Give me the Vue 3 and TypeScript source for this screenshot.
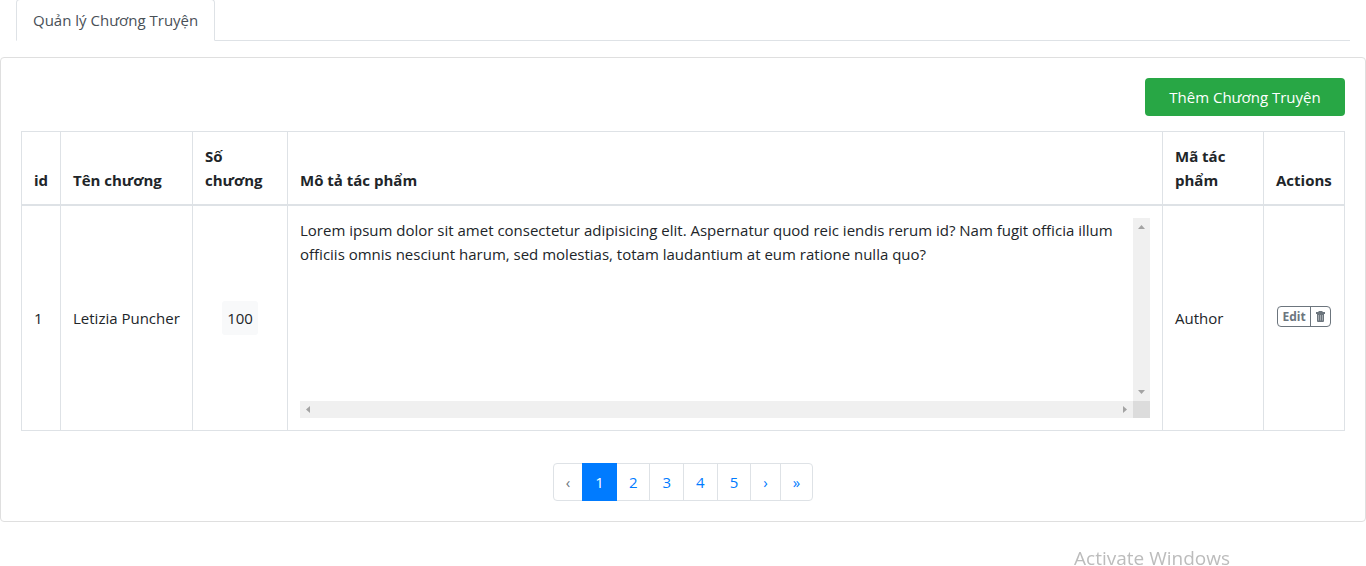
<script setup lang="ts">
interface Chapter {
  id: number
  name: string
  count: number
  description: string
  author: string
}

const chapters: Chapter[] = [
  {
    id: 1,
    name: 'Letizia Puncher',
    count: 100,
    description:
      'Lorem ipsum dolor sit amet consectetur adipisicing elit. Aspernatur quod reic iendis rerum id? Nam fugit officia illum officiis omnis nesciunt harum, sed molestias, totam laudantium at eum ratione nulla quo?',
    author: 'Author',
  },
]

const pages: number[] = [1, 2, 3, 4, 5]
const current = 1
</script>

<template>
  <div class="page">
    <nav class="tabs">
      <a class="tab" href="#">Quản lý Chương Truyện</a>
    </nav>

    <main class="card">
      <div class="toolbar">
        <button class="add" type="button">Thêm Chương Truyện</button>
      </div>

      <table class="grid">
        <colgroup>
          <col class="c-id" />
          <col class="c-name" />
          <col class="c-count" />
          <col />
          <col class="c-author" />
          <col class="c-actions" />
        </colgroup>
        <thead>
          <tr>
            <th scope="col">id</th>
            <th scope="col">Tên chương</th>
            <th scope="col">Số chương</th>
            <th scope="col">Mô tả tác phẩm</th>
            <th scope="col">Mã tác phẩm</th>
            <th scope="col" class="tight">Actions</th>
          </tr>
        </thead>
        <tbody>
          <tr v-for="c in chapters" :key="c.id">
            <td>{{ c.id }}</td>
            <td>{{ c.name }}</td>
            <td class="center"><span class="count">{{ c.count }}</span></td>
            <td>
              <div class="scroller">
                <div class="desc">{{ c.description }}</div>
                <div class="bar vertical">
                  <svg width="17" height="17" viewBox="0 0 17 17" aria-hidden="true"><path d="M5 11h7L8.500 7z" /></svg>
                  <svg width="17" height="17" viewBox="0 0 17 17" aria-hidden="true"><path d="M5 6h7L8.500 10z" /></svg>
                </div>
                <div class="bar">
                  <svg width="17" height="17" viewBox="0 0 17 17" aria-hidden="true"><path d="M10 5v7L6 8.500z" /></svg>
                  <svg width="17" height="17" viewBox="0 0 17 17" aria-hidden="true"><path d="M7 5v7l4-3.500z" /></svg>
                </div>
                <div class="corner"></div>
              </div>
            </td>
            <td>{{ c.author }}</td>
            <td>
              <div class="group">
                <button type="button">Edit</button>
                <button type="button" aria-label="Delete">
                  <svg width="9" height="11" viewBox="0 0 9 11" aria-hidden="true">
                    <path
                      fill="currentColor"
                      fill-rule="evenodd"
                      d="M3 0h3l1 1h2v2H0V1h2zM1 3h7v7q0 1-1 1H2q-1 0-1-1zM2.600 4v5.500h.4V4zM4.300 4v5.500h.4V4zM6 4v5.500h.4V4z"
                    />
                  </svg>
                </button>
              </div>
            </td>
          </tr>
        </tbody>
      </table>

      <nav class="pager" aria-label="Pagination">
        <a class="muted" href="#" aria-label="Previous">‹</a>
        <a v-for="p in pages" :key="p" href="#" :class="{ active: p === current }">{{ p }}</a>
        <a href="#" aria-label="Next">›</a>
        <a href="#" aria-label="Last">»</a>
      </nav>
    </main>

    <div class="watermark">Activate Windows</div>
  </div>
</template>

<style>
body {
  overflow: hidden;
  background: #fff;
}
</style>

<style scoped>
.page,
.page * {
  box-sizing: border-box;
}
.page {
  display: flow-root;
  font-family: 'Open Sans', 'Noto Sans', sans-serif;
  font-size: 15px;
  line-height: 24px;
  color: #212529;
}
.page button {
  font-family: inherit;
  margin: 0;
}
.page a {
  text-decoration: none;
}
.tabs {
  display: flex;
  margin: -1px 16px 16px;
  border-bottom: 1px solid #dee2e6;
}
.tab {
  margin-bottom: -1px;
  padding: 8px 16px;
  border: 1px solid #dee2e6;
  border-bottom-color: #fff;
  border-radius: 4px 4px 0 0;
  background: #fff;
  color: #495057;
}
.card {
  padding: 20px;
  border: 1px solid #dfdfdf;
  border-radius: 4px;
}
.toolbar {
  display: flex;
  justify-content: flex-end;
  margin-bottom: 15px;
}
.add {
  width: 200px;
  height: 38px;
  padding: 0;
  border: 0;
  border-radius: 4px;
  background: #28a745;
  color: #fff;
  font-size: 15px;
  line-height: 24px;
}
.grid {
  width: 100%;
  table-layout: fixed;
  border-collapse: collapse;
}
.c-id {
  width: 39px;
}
.c-name {
  width: 132px;
}
.c-count {
  width: 95px;
}
.c-author {
  width: 101px;
}
.c-actions {
  width: 81px;
}
th,
td {
  padding: 12px;
  border: 1px solid #dee2e6;
  text-align: left;
}
th {
  vertical-align: bottom;
  border-bottom-width: 2px;
  font-weight: 700;
}
th.tight {
  padding-right: 8px;
}
td {
  vertical-align: middle;
  white-space: nowrap;
}
td.center {
  text-align: center;
}
.count {
  display: inline-block;
  padding: 5px;
  border-radius: 3px;
  background: #f8f9fa;
}
.scroller {
  display: grid;
  grid-template-columns: 1fr 17px;
  grid-template-rows: 1fr 17px;
  height: 200px;
}
.desc {
  white-space: normal;
}
.bar {
  display: flex;
  justify-content: space-between;
  background: #f0f0f0;
  fill: #a3a3a3;
}
.bar.vertical {
  flex-direction: column;
}
.corner {
  background: #dcdcdc;
}
.group {
  display: flex;
  width: 54px;
  height: 21px;
  margin: 0 1px 3px;
  border: 1px solid #6c757d;
  border-radius: 4px;
}
.group button {
  display: flex;
  flex: 1;
  align-items: center;
  justify-content: center;
  padding: 0;
  border: 0;
  background: none;
  color: #6c757d;
  font-size: 12px;
  font-weight: 700;
  line-height: 18px;
}
.group button:first-child {
  flex: 0 0 33px;
  border-right: 1px solid #6c757d;
}
.pager {
  display: flex;
  justify-content: center;
  margin-top: 32px;
}
.pager a {
  padding: 6px 12px;
  border: 1px solid #dee2e6;
  color: #007bff;
  line-height: 24px;
}
.pager a + a {
  margin-left: -1px;
}
.pager a:first-child {
  border-radius: 4px 0 0 4px;
}
.pager a:last-child {
  border-radius: 0 4px 4px 0;
}
.pager a.muted {
  color: #6c757d;
}
.pager a.active {
  z-index: 1;
  border-color: #007bff;
  background: #007bff;
  color: #fff;
}
.watermark {
  position: fixed;
  right: 136px;
  bottom: 0;
  color: #bcbcbc;
  font-size: 19px;
  line-height: 16px;
}
</style>
